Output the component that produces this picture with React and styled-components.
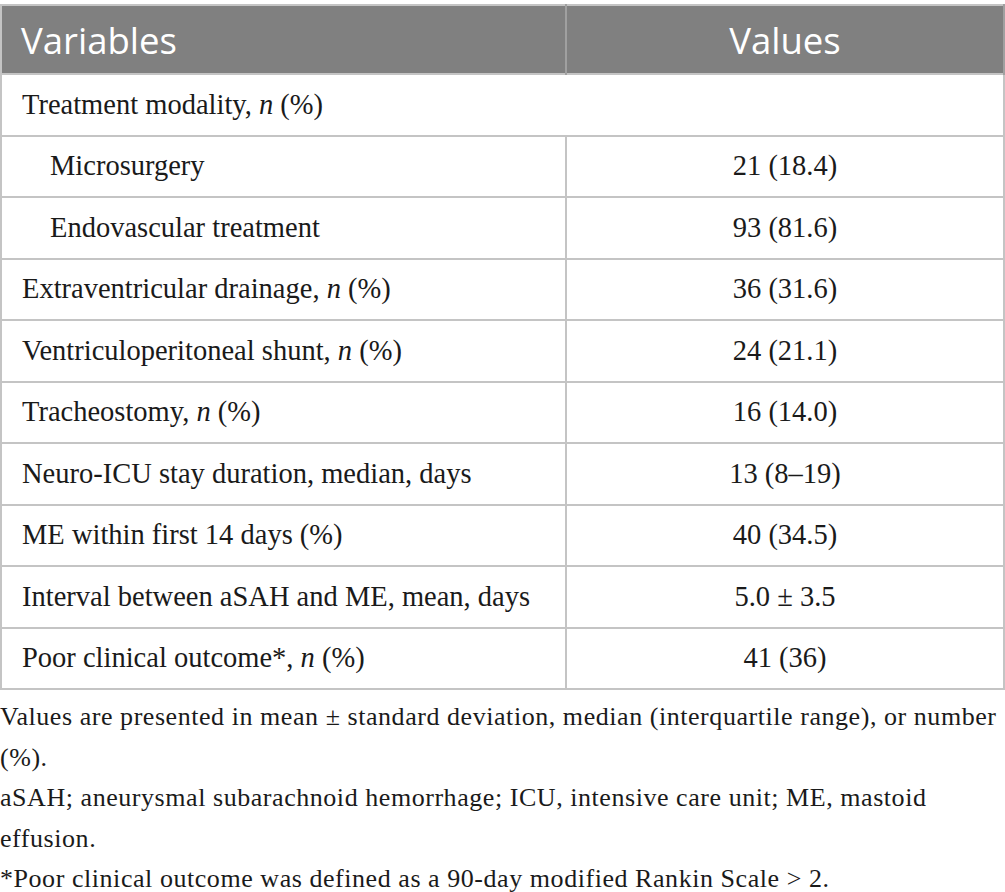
import React from "react";
import styled, { createGlobalStyle } from "styled-components";

const Global = createGlobalStyle`
  html, body { margin: 0; padding: 0; background: #fff; }
  body { width: 1005px; }
`;

const Wrap = styled.div`
  padding-top: 4px;
  width: 1005px;
`;

const Table = styled.table`
  width: 1005px;
  border-collapse: collapse;
  table-layout: fixed;
  border: 2px solid #c4c4c4;
`;

const HeadCell = styled.th`
  background: #808080;
  color: #fff;
  font-family: "Open Sans", "Noto Sans", sans-serif;
  font-weight: 400;
  font-size: 36.5px;
  height: 67px;
  padding: 0 0 0 ${p => (p.$center ? "0" : "19px")};
  text-align: ${p => (p.$center ? "center" : "left")};
  border-right: 2px solid #a0a0a0;
  vertical-align: middle;
`;

const Row = styled.tr`
  height: 61.5px;
  border-top: 2px solid #c4c4c4;
`;

const Cell = styled.td`
  font-family: "Liberation Serif", "Times New Roman", serif;
  font-size: 28.5px;
  color: #1a1a1a;
  padding: 0 0 0 ${p => (p.$indent ? "48px" : "20px")};
  text-align: left;
  vertical-align: middle;
  border-right: 2px solid #c4c4c4;
`;

const ValueCell = styled(Cell)`
  text-align: center;
  padding: 0;
`;

const Notes = styled.div`
  font-family: "Liberation Serif", "Times New Roman", serif;
  font-size: 26px;
  line-height: 40.5px;
  color: #1a1a1a;
  padding-top: 7px;
  letter-spacing: 0.55px;
`;

const Note = styled.p`
  margin: 0;
`;

const rows = [
  { label: <>Microsurgery</>, value: "21 (18.4)", indent: true },
  { label: <>Endovascular treatment</>, value: "93 (81.6)", indent: true },
  { label: <>Extraventricular drainage, <i>n</i> (%)</>, value: "36 (31.6)" },
  { label: <>Ventriculoperitoneal shunt, <i>n</i> (%)</>, value: "24 (21.1)" },
  { label: <>Tracheostomy, <i>n</i> (%)</>, value: "16 (14.0)" },
  { label: <>Neuro-ICU stay duration, median, days</>, value: "13 (8–19)" },
  { label: <>ME within first 14 days (%)</>, value: "40 (34.5)" },
  { label: <>Interval between aSAH and ME, mean, days</>, value: "5.0 ± 3.5" },
  { label: <>Poor clinical outcome*, <i>n</i> (%)</>, value: "41 (36)" },
];

export default function App() {
  return (
    <Wrap>
      <Global />
      <Table>
        <colgroup>
          <col style={{ width: "565px" }} />
          <col />
        </colgroup>
        <thead>
          <tr>
            <HeadCell>Variables</HeadCell>
            <HeadCell $center>Values</HeadCell>
          </tr>
        </thead>
        <tbody>
          <Row>
            <Cell colSpan={2}>Treatment modality, <i>n</i> (%)</Cell>
          </Row>
          {rows.map((r, i) => (
            <Row key={i}>
              <Cell $indent={r.indent}>{r.label}</Cell>
              <ValueCell>{r.value}</ValueCell>
            </Row>
          ))}
        </tbody>
      </Table>
      <Notes>
        <Note>Values are presented in mean ± standard deviation, median (interquartile range), or number (%).</Note>
        <Note>aSAH; aneurysmal subarachnoid hemorrhage; ICU, intensive care unit; ME, mastoid effusion.</Note>
        <Note>*Poor clinical outcome was defined as a 90-day modified Rankin Scale &gt; 2.</Note>
      </Notes>
    </Wrap>
  );
}
